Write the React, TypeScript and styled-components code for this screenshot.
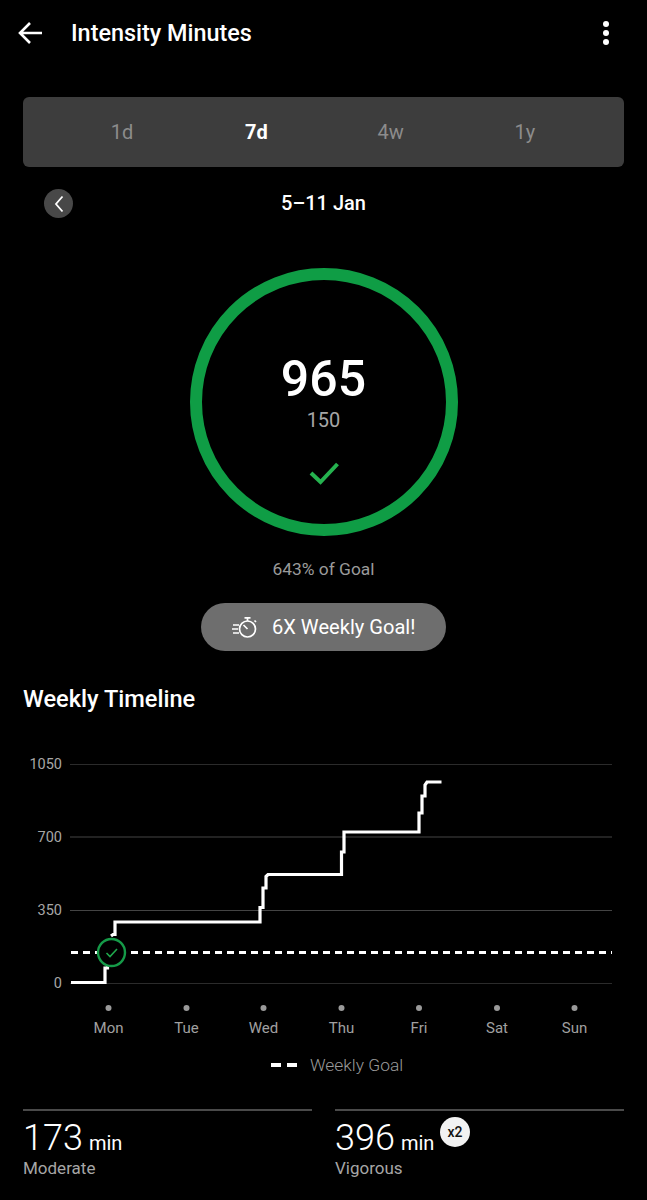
import React from 'react';
import styled, { createGlobalStyle } from 'styled-components';

const GlobalStyle = createGlobalStyle`
  html, body {
    margin: 0;
    padding: 0;
    background: #000;
    font-family: Roboto, "Liberation Sans", sans-serif;
  }
`;

const Screen = styled.div`
  width: 647px;
  height: 1200px;
  overflow: hidden;
  background: #000;
  color: #fff;
`;

const Header = styled.header`
  height: 66px;
  display: flex;
  align-items: center;
  padding: 0 18px;
`;

const HeaderTitle = styled.h1`
  flex: 1;
  margin: 0 0 0 29px;
  font-size: 23.4px;
  line-height: 28px;
  font-weight: 500;
`;

const IconSlot = styled.svg`
  display: block;
  flex: none;
`;

const MenuDots = styled.div`
  display: flex;
  flex-direction: column;
  gap: 3px;
  margin-right: 20px;

  span {
    width: 6px;
    height: 6px;
    border-radius: 50%;
    background: #fff;
  }
`;

const RangeTabs = styled.div`
  margin: 31px 23px 0;
  height: 70px;
  padding: 0 32px;
  display: grid;
  grid-template-columns: repeat(4, 1fr);
  align-items: center;
  background: #3d3d3d;
  border-radius: 6px;
`;

const RangeTab = styled.div<{ $active?: boolean }>`
  text-align: center;
  font-size: 20px;
  font-weight: ${({ $active }) => ($active ? 700 : 400)};
  color: ${({ $active }) => ($active ? '#fff' : '#8c8c8c')};
`;

const DateRow = styled.div`
  margin: 22px 44px 0;
  height: 29px;
  display: grid;
  grid-template-columns: 29px 1fr 29px;
  align-items: center;
`;

const PrevButton = styled.div`
  width: 29px;
  height: 29px;
  border-radius: 50%;
  background: #484848;
  display: flex;
  align-items: center;
  justify-content: center;
`;

const DateLabel = styled.div`
  text-align: center;
  font-size: 20px;
  line-height: 27px;
  font-weight: 500;
`;

const Ring = styled.div`
  box-sizing: border-box;
  width: 268px;
  height: 268px;
  margin: 50px auto 0;
  border: 12px solid #0f9d45;
  border-radius: 50%;
  display: flex;
  flex-direction: column;
  align-items: center;
`;

const RingValue = styled.div`
  margin-top: 77px;
  font-size: 50px;
  line-height: 44px;
  font-weight: 500;
`;

const RingGoal = styled.div`
  margin-top: 7px;
  font-size: 20px;
  line-height: 24px;
  color: #a6a6a6;
`;

const RingCheck = styled.svg`
  margin-top: 29px;
  display: block;
`;

const GoalPercent = styled.div`
  margin-top: 23px;
  text-align: center;
  font-size: 17.4px;
  line-height: 20px;
  color: #9a9a9a;
`;

const Pill = styled.div`
  width: 245px;
  height: 48px;
  margin: 24px auto 0;
  border-radius: 24px;
  background: #6e6e6e;
  display: flex;
  align-items: center;
  justify-content: flex-start;
  gap: 14px;
  padding-left: 31px;
  box-sizing: border-box;
  font-size: 20.1px;
`;

const SectionTitle = styled.h2`
  margin: 34px 23px 0;
  font-size: 23.6px;
  line-height: 28px;
  font-weight: 500;
`;

const ChartSvg = styled.svg`
  display: block;
  margin-top: 32px;
`;

const AxisLabel = styled.text`
  font-size: 14.5px;
  fill: #a6a6a6;
`;

const DayLabel = styled.text`
  font-size: 15px;
  fill: #a0a0a0;
`;

const Legend = styled.div`
  margin-top: 10px;
  height: 20px;
  display: flex;
  align-items: center;
  padding-left: 271px;
  gap: 13px;
  font-size: 17.4px;
  font-weight: 300;
  color: #999;
`;

const LegendDashes = styled.div`
  display: flex;
  gap: 6px;

  span {
    width: 10px;
    height: 4px;
    background: #fff;
  }
`;

const Stats = styled.div`
  margin: 34px 23px 0;
  display: grid;
  grid-template-columns: 289px 289px;
  justify-content: space-between;
`;

const Stat = styled.div`
  position: relative;
  border-top: 2px solid #4a4a4a;
  padding-top: 7px;
`;

const StatValue = styled.div`
  display: flex;
  align-items: baseline;
  gap: 6px;
  font-size: 36px;
  font-weight: 300;
  line-height: 40px;
`;

const StatUnit = styled.span`
  font-size: 20px;
  font-weight: 400;
`;

const StatLabel = styled.div`
  margin-top: -6px;
  font-size: 17px;
  line-height: 22px;
  color: #a6a6a6;
`;

const MultiplierBadge = styled.div`
  position: absolute;
  left: 105px;
  top: 6px;
  width: 30px;
  height: 30px;
  border-radius: 50%;
  background: #f2f2f2;
  color: #111;
  font-size: 14px;
  font-weight: 500;
  display: flex;
  align-items: center;
  justify-content: center;
`;

const tabs = [
  { label: '1d' },
  { label: '7d', active: true },
  { label: '4w' },
  { label: '1y' },
];

const gridLines = [
  { y: 764.5, label: '1050', color: '#2b2b2b' },
  { y: 837, label: '700', color: '#444' },
  { y: 910.5, label: '350', color: '#444' },
  { y: 983.5, label: '0', color: '#2b2b2b' },
];

const days = [
  { x: 108.5, label: 'Mon' },
  { x: 186.5, label: 'Tue' },
  { x: 263.5, label: 'Wed' },
  { x: 341.5, label: 'Thu' },
  { x: 419, label: 'Fri' },
  { x: 497, label: 'Sat' },
  { x: 574.5, label: 'Sun' },
];

const timeline =
  'M71 982.5 H105 V968 H107.5 V964 M111 936 L113 934.5 H115 V922 H260 V907.5 H263 V888 H266 V876.5 L268 874.5 H341.5 V852 H344 V832 H419 V813 H422 V796 H425 V785 L427 782 H441.5';

const App: React.FC = () => {
  return (
    <Screen>
      <GlobalStyle />
      <Header>
        <IconSlot width="24" height="24" viewBox="0 0 24 24" fill="none" stroke="#fff" strokeWidth="2.6">
          <path d="M24 12 H2 M12 2 L2 12 L12 22" />
        </IconSlot>
        <HeaderTitle>Intensity Minutes</HeaderTitle>
        <MenuDots>
          <span />
          <span />
          <span />
        </MenuDots>
      </Header>

      <RangeTabs>
        {tabs.map((tab) => (
          <RangeTab key={tab.label} $active={tab.active}>
            {tab.label}
          </RangeTab>
        ))}
      </RangeTabs>

      <DateRow>
        <PrevButton>
          <IconSlot width="12" height="18" viewBox="0 0 12 18" fill="none" stroke="#fff" strokeWidth="1.8">
            <path d="M9.5 1.5 L3 9 L9.5 16.5" />
          </IconSlot>
        </PrevButton>
        <DateLabel>5–11 Jan</DateLabel>
      </DateRow>

      <Ring>
        <RingValue>965</RingValue>
        <RingGoal>150</RingGoal>
        <RingCheck width="30" height="24" viewBox="0 0 30 24" fill="none" stroke="#25b24f" strokeWidth="4">
          <path d="M2 12 L11.5 21 L28.5 3" />
        </RingCheck>
      </Ring>

      <GoalPercent>643% of Goal</GoalPercent>

      <Pill>
        <IconSlot width="26" height="26" viewBox="0 0 26 26" fill="none" stroke="#fff" strokeWidth="1.7">
          <circle cx="15.5" cy="15" r="8" />
          <path d="M12.5 3.8 H18.5 M15.5 3.8 V7 M22.5 6.5 L24 8 M15.5 15 L11.5 11 M1 11 H7 M0 15 H6 M1 19 H7" />
        </IconSlot>
        6X Weekly Goal!
      </Pill>

      <SectionTitle>Weekly Timeline</SectionTitle>

      <ChartSvg width="647" height="300" viewBox="0 745 647 300" fill="none">
        {gridLines.map((line) => (
          <g key={line.label}>
            <line x1="70" x2="612" y1={line.y} y2={line.y} stroke={line.color} strokeWidth="1.2" />
            <AxisLabel x="62" y={line.y + 4.5} textAnchor="end">
              {line.label}
            </AxisLabel>
          </g>
        ))}
        <line x1="71" x2="612" y1="952.5" y2="952.5" stroke="#fff" strokeWidth="3.2" strokeDasharray="7 5" />
        <path d={timeline} stroke="#fff" strokeWidth="3.2" />
        <circle cx="111.5" cy="952.5" r="13.5" fill="#000" stroke="#159a48" strokeWidth="2.4" />
        <path d="M106.5 953 L110 956.5 L117 949" stroke="#1fa84c" strokeWidth="1.6" />
        {days.map((day) => (
          <g key={day.label}>
            <circle cx={day.x} cy="1008" r="3" fill="#9a9a9a" />
            <DayLabel x={day.x} y="1033" textAnchor="middle">
              {day.label}
            </DayLabel>
          </g>
        ))}
      </ChartSvg>

      <Legend>
        <LegendDashes>
          <span />
          <span />
        </LegendDashes>
        Weekly Goal
      </Legend>

      <Stats>
        <Stat>
          <StatValue>
            173 <StatUnit>min</StatUnit>
          </StatValue>
          <StatLabel>Moderate</StatLabel>
        </Stat>
        <Stat>
          <StatValue>
            396 <StatUnit>min</StatUnit>
          </StatValue>
          <StatLabel>Vigorous</StatLabel>
          <MultiplierBadge>x2</MultiplierBadge>
        </Stat>
      </Stats>
    </Screen>
  );
};

export default App;
